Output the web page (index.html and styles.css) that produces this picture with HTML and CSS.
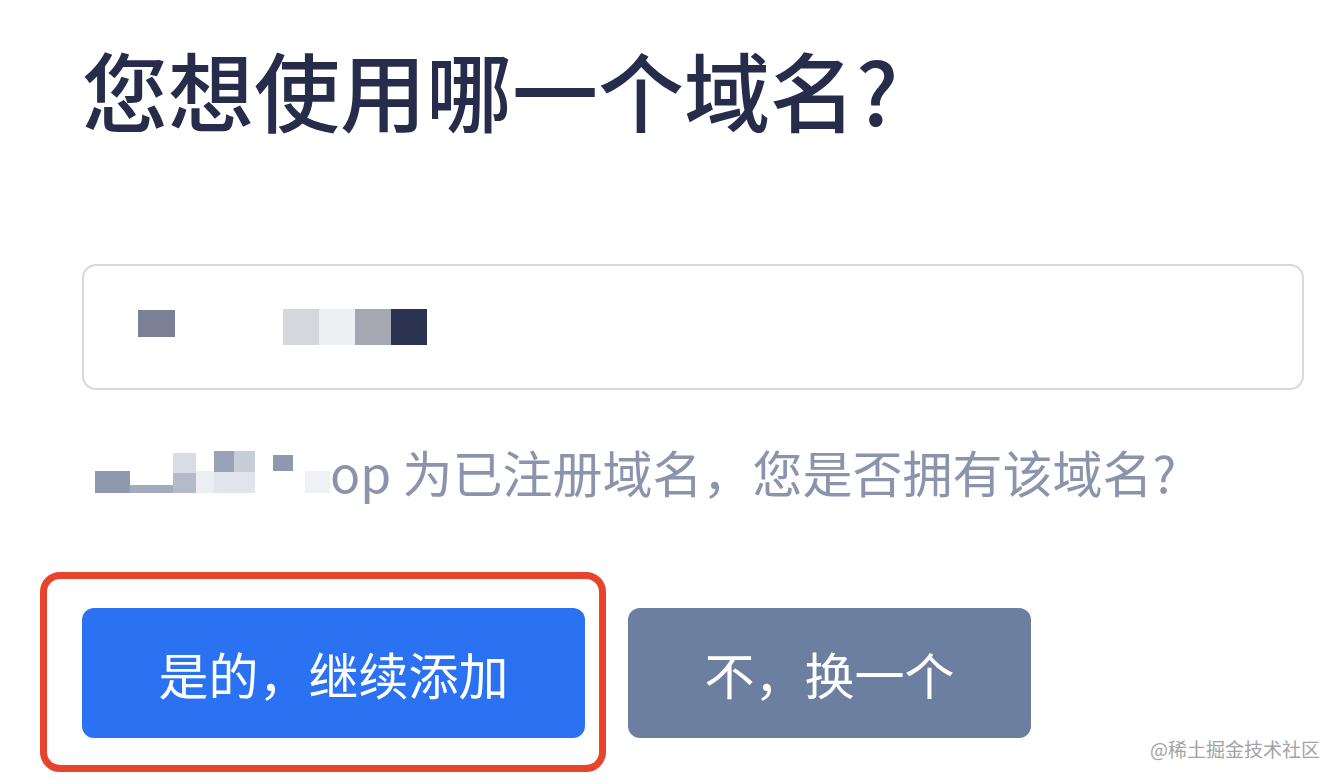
FILE: index.html
```html
<!DOCTYPE html>
<html>
<head>
    <meta charset="utf-8">
    <title>添加域名</title>
    <link rel="stylesheet" href="styles.css">
</head>
<body>
    <div class="domain-page">
        <h1 class="title">您想使用哪一个域名?</h1>

        <!-- Domain input (content pixelated in the capture) -->
        <div class="domain-input">
            <span class="px px-a"></span>
            <span class="px-group">
                <span class="px px-b"></span>
                <span class="px px-c"></span>
                <span class="px px-d"></span>
                <span class="px px-e"></span>
            </span>
        </div>

        <p class="notice">
            <span class="mask">
                <span class="m m1"></span>
                <span class="m m2"></span>
                <span class="m m3"></span>
                <span class="m m4"></span>
                <span class="m m5"></span>
                <span class="m m6"></span>
                <span class="m m7"></span>
            </span>
            <span class="notice-text">op 为已注册域名，您是否拥有该域名?</span>
        </p>

        <div class="actions">
            <button class="btn btn-primary">是的，继续添加</button>
            <button class="btn btn-secondary">不，换一个</button>
            <!-- Highlight frame -->
            <span class="highlight"></span>
        </div>
    </div>
    <div class="watermark">@稀土掘金技术社区</div>
</body>
</html>
```

FILE: styles.css
```css
body {
    margin: 0;
    background-color: #fff;
    font-family: "Noto Sans CJK SC", "Noto Sans", sans-serif;
    width: 1340px;
    height: 784px;
    overflow: hidden;
    position: relative;
}

.domain-page {
    padding: 46px 0 0 82px;
}

.title {
    margin: 0;
    font-size: 86px;
    line-height: 86px;
    font-weight: 500;
    color: #262c4a;
    letter-spacing: 0;
}

/* Input */
.domain-input {
    box-sizing: border-box;
    width: 1222px;
    height: 126px;
    margin-top: 132px;
    border: 2px solid #d5d8e0;
    border-radius: 14px;
    display: flex;
    align-items: center;
    padding-left: 54px;
}

.px {
    display: block;
    width: 36px;
    height: 36px;
}

.px-a {
    width: 37px;
    height: 27px;
    margin-top: -8px;
    background-color: #7c8095;
}

.px-group {
    display: flex;
    margin-left: 108px;
}

.px-b { background-color: #d6d7dd; }
.px-c { background-color: #eeeff2; }
.px-d { background-color: #a5a7b2; }
.px-e { background-color: #2c3351; }

/* Notice */
.notice {
    margin: 56px 0 0 13px;
    display: flex;
    align-items: center;
    height: 50px;
    font-size: 50px;
    line-height: 50px;
    color: #8b94ad;
}

.mask {
    display: flex;
    align-items: flex-end;
    width: 235px;
    height: 44px;
}

.m {
    display: block;
}

.m1 { width: 35px; height: 22px; background-color: #8e99b0; }
.m2 { width: 43px; height: 8px; background-color: #a3abbe; }
.m3 { width: 23px; height: 40px; background: linear-gradient(#d8dce4 50%, #b3bbca 50%); }
.m4 { width: 18px; height: 22px; background-color: #eceef2; }
.m5 { width: 41px; height: 42px; background: linear-gradient(90deg, #98a3b8 50%, #c8ced9 50%) top / 100% 50% no-repeat, #e1e4ea; }
.m6 { width: 20px; height: 16px; margin: 0 0 22px 18px; background-color: #8e99b0; }
.m7 { width: 25px; height: 22px; margin-left: 12px; background-color: #f0f1f4; }

.notice-text {
    white-space: nowrap;
}

/* Buttons */
.actions {
    position: relative;
    display: flex;
    gap: 43px;
    margin-top: 112px;
}

.btn {
    height: 130px;
    border: none;
    border-radius: 12px;
    font-family: inherit;
    font-size: 50px;
    color: #fff;
    padding: 0;
    cursor: pointer;
}

.btn-primary {
    width: 503px;
    background-color: #2a72f2;
}

.btn-secondary {
    width: 403px;
    background-color: #6c7fa0;
}

.highlight {
    position: absolute;
    left: -42px;
    top: -36px;
    width: 566px;
    height: 200px;
    box-sizing: border-box;
    border: 7px solid #e8432c;
    border-radius: 20px;
    pointer-events: none;
}

.watermark {
    position: absolute;
    right: 20px;
    bottom: 22px;
    font-size: 19px;
    color: #a3a3a3;
}
```
